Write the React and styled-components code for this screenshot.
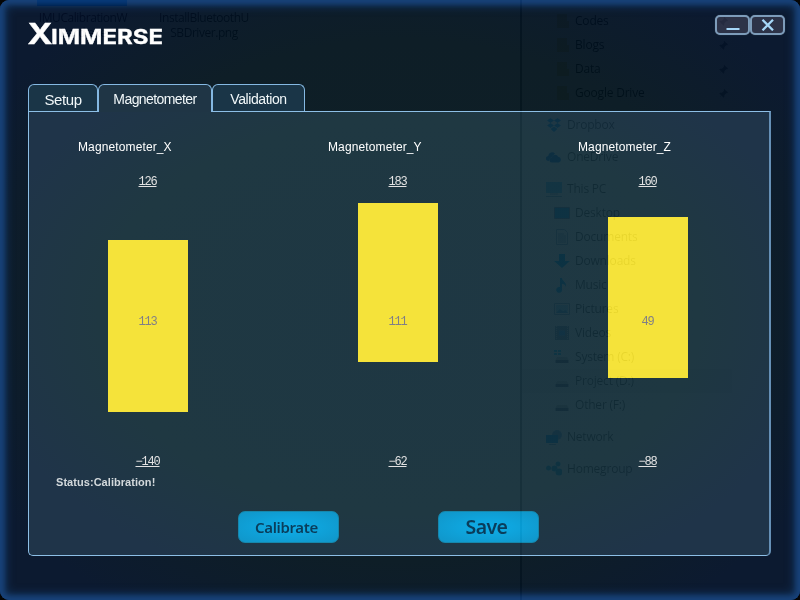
import React from "react";
import styled, { createGlobalStyle } from "styled-components";

const Global = createGlobalStyle`
  * { box-sizing: border-box; }
  body { margin: 0; background: #050505; overflow: hidden; }
`;

const Window = styled.main`
  position: relative;
  width: 800px;
  height: 600px;
  padding: 15px 15px 0 28px;
  overflow: hidden;
  border-radius: 9px;
  font-family: "Liberation Sans", Arial, sans-serif;
  background: radial-gradient(ellipse 60% 62% at 50% 50%, #0f2025 0%, #0e1e27 70%, #0c1a30 100%);
  box-shadow: inset 0 0 5px 4px #184279, inset 0 0 10px 6px #123560;
`;

const Header = styled.header`
  display: flex;
  justify-content: space-between;
  align-items: flex-start;
  height: 69px;
`;

const Logo = styled.svg`
  margin-top: 6px;
  fill: #fff;
  stroke: #fff;
  font-family: "Inter", "DejaVu Sans", sans-serif;
  font-weight: 700;
`;

const WindowButtons = styled.div`
  display: flex;
`;

const WindowButton = styled.button`
  display: grid;
  place-items: center;
  width: 35px;
  height: 20px;
  padding: 0;
  border: 2px solid #7d9cba;
  border-radius: 5px;
  background: #2d3348;
  box-shadow: 0 0 1px #566579;
`;

const Tabs = styled.nav`
  display: flex;
  height: 27px;
`;

const Tab = styled.button`
  width: ${(p) => p.$width}px;
  height: ${(p) => (p.$active ? 28 : 27)}px;
  padding: ${(p) => (p.$active ? "1px 0 0" : "2px 0 0")};
  border: 1px solid #85b9e3;
  border-bottom: 0;
  border-radius: 6px 6px 0 0;
  background: ${(p) => (p.$active ? "#1f3545" : "#1a3547")};
  color: #f2f8fa;
  font: ${(p) => p.$size}px "Liberation Sans", Arial, sans-serif;
  letter-spacing: ${(p) => p.$spacing || 0}px;
  white-space: nowrap;
  z-index: 1;
`;

const Panel = styled.section`
  display: flex;
  flex-direction: column;
  width: 743px;
  height: 445px;
  border: 1px solid #8dbfe6;
  border-right: 2px solid #6690b6;
  border-radius: 0 0 5px 5px;
  background: radial-gradient(ellipse 58% 64% at 50% 46%, #1e3743 0%, #1f3842 70%, #1f3449 100%);
`;

const Meters = styled.div`
  display: grid;
  grid-template-columns: repeat(3, 250px);
  padding: 27px 0 0 49px;
  height: 360px;
`;

const Meter = styled.div`
  display: flex;
  flex-direction: column;
  width: 140px;
`;

const MeterTitle = styled.div`
  height: 16px;
  margin-bottom: 19px;
  color: #fff;
  font-size: 12px;
  line-height: 16px;
  letter-spacing: 0.12px;
  white-space: nowrap;
`;

const Value = styled.div`
  height: 14px;
  padding-right: 1px;
  color: ${(p) => (p.$inside ? "#807f86" : "#e2e2e2")};
  font: 12px/16px "Liberation Mono", monospace;
  letter-spacing: -1.2px;
  text-align: center;
  text-decoration: ${(p) => (p.$inside ? "none" : "underline")};
  text-decoration-thickness: 1px;
  text-underline-offset: 1px;
`;

const Track = styled.div`
  display: grid;
  width: 80px;
  height: 266px;
  margin-left: 30px;
`;

const Bar = styled.div`
  grid-area: 1 / 1;
  height: ${(p) => p.$height}px;
  margin-top: ${(p) => p.$top}px;
  background: #f5e33a;
`;

const Current = styled.div`
  grid-area: 1 / 1;
  align-self: center;
  z-index: 1;
`;

const Status = styled.div`
  height: 16px;
  margin: 2px 0 0 27px;
  color: #d3d9dc;
  font-size: 11px;
  font-weight: 700;
  line-height: 16px;
  letter-spacing: 0.05px;
`;

const Actions = styled.div`
  display: flex;
  gap: 99px;
  padding: 21px 0 0 209px;
`;

const Action = styled.button`
  width: 101px;
  height: 32px;
  padding: 0 4px 0 0;
  border: 1px solid #1687ac;
  border-radius: 7px;
  background: radial-gradient(ellipse at center, #0eade9 0%, #0fa4dc 40%, #1095c8 100%);
  color: #0a3d5b;
  font: 600 ${(p) => p.$size}px/28px "Noto Sans", sans-serif;
  letter-spacing: ${(p) => p.$spacing}px;
`;

/* The desktop seen through the translucent window: every colour is subtracted. */
const Backdrop = styled.aside`
  position: absolute;
  inset: 0;
  z-index: 2;
  pointer-events: none;
  mix-blend-mode: difference;
  color: #0e0e0e;
  font: 12px/16px "Open Sans", "Noto Sans", sans-serif;
  letter-spacing: -0.2px;
`;

const Files = styled.div`
  position: absolute;
  left: -37px;
  top: 10px;
  display: flex;
  text-align: center;
  line-height: 15px;
  letter-spacing: -0.45px;
`;

const FileName = styled.div`
  width: ${(p) => p.$width}px;
`;

const Thumbnail = styled.div`
  position: absolute;
  left: 37px;
  top: 0;
  width: 90px;
  height: 6px;
  background: #100800;
`;

const Explorer = styled.div`
  position: absolute;
  left: 520px;
  top: 0;
  bottom: 0;
  width: 280px;
  padding-top: 9px;
  border-left: 2px solid #080808;
`;

const Item = styled.div`
  display: flex;
  align-items: center;
  gap: 5px;
  width: 210px;
  height: 24px;
  margin-top: ${(p) => (p.$gap ? 8 : 0)}px;
  padding-left: ${(p) => (p.$nested ? 32 : 24)}px;
  padding-right: 3px;
  background: ${(p) => (p.$selected ? "#010101" : "transparent")};
`;

const ItemName = styled.span`
  flex: 1;
`;

const ItemIcon = styled.svg`
  flex: none;
  width: 16px;
  height: 16px;
`;

const Pin = () => (
  <svg width="11" height="11" viewBox="0 0 12 12" fill="#080808">
    <path d="M7 1l4 4-1 1-1-.3L7 8l-.2 2L6 10.600 3.800 8.200 1 11l2.400-3.200L1.200 6l1-.8 2 .1L6.500 3 6 2z" />
  </svg>
);

const drive = (
  <g>
    <path d="M3 8h10l1.500 3h-13z" fill="#040404" />
    <rect x="1.500" y="11" width="13" height="3" fill="#0b0b09" />
  </g>
);

const icons = {
  folder: <path d="M3 1h10v7h2v7H3z" fill="#010206" />,
  dropbox: <path d="M4.500 1L8 3.500 4.500 6 1 3.500zM11.500 1L15 3.500 11.500 6 8 3.500zM4.500 6L8 8.500 4.500 11 1 8.500zM11.500 6L15 8.500 11.500 11 8 8.500zM4.500 12L8 9.500l3.500 2.500L8 15z" fill="#120700" />,
  cloud: (
    <g>
      <path d="M2.500 12a2.500 2.500 0 01-.3-5A4 4 0 019 4.500" fill="#120a02" />
      <path d="M6 13.500a2.500 2.500 0 01-.3-5 3.500 3.500 0 016.600-.8 3 3 0 01.7 5.800z" fill="#120a02" />
    </g>
  ),
  pc: (
    <g>
      <rect x="0" y="1" width="16" height="11" fill="#0c0400" />
      <path d="M4 13h8M0 15.500h16" stroke="#090604" />
    </g>
  ),
  desktop: <path d="M.5 2.500h15v11H.5z" fill="#110600" stroke="#0a0805" />,
  doc: <path d="M2.500 .5h8l3 3v12h-11zM4 5h6M4 7h8M4 9h8M4 11h8M4 13h8" fill="none" stroke="#080604" />,
  down: <path d="M5 1h6v7h5l-8 7-8-7h5z" fill="#130600" />,
  music: <path d="M6 1h2c0 3 5 4 4 9-1-3-3-3-4-3v5a3 3 0 11-2-2z" fill="#120600" />,
  picture: (
    <g>
      <path d="M.5 2.500h15v11H.5z" fill="none" stroke="#080604" />
      <path d="M2 4h12v8H2z" fill="#060200" />
      <path d="M2 12l4-4 3 2 3-1 2 3z" fill="#0c0602" />
    </g>
  ),
  video: (
    <g>
      <rect x="1" y="1" width="14" height="14" fill="#090705" />
      <path d="M2.500 1v14M13.500 1v14" stroke="#020202" strokeDasharray="1 1" />
      <path d="M5 8h6" stroke="#0d0600" strokeWidth="5" />
    </g>
  ),
  system: (
    <g>
      <path d="M0 1h3v2H0zM4 1h3v2H4zM0 4h3v2H0zM4 4h3v2H4z" fill="#100400" />
      {drive}
    </g>
  ),
  drive,
  network: (
    <g>
      <circle cx="11" cy="6" r="5" fill="#0a0602" />
      <path d="M0 6h12v8H0z" fill="#120700" />
      <path d="M3 15.500h7" stroke="#090604" />
    </g>
  ),
  group: (
    <g fill="#100602">
      <circle cx="2.500" cy="7" r="2.500" />
      <circle cx="12" cy="3" r="2.500" />
      <circle cx="8.500" cy="7.500" r="3" />
      <circle cx="13" cy="11" r="3.500" />
    </g>
  ),
};

const items = [
  { name: "Codes", icon: "folder", nested: true, pin: true },
  { name: "Blogs", icon: "folder", nested: true, pin: true },
  { name: "Data", icon: "folder", nested: true, pin: true },
  { name: "Google Drive", icon: "folder", nested: true, pin: true },
  { name: "Dropbox", icon: "dropbox", gap: true },
  { name: "OneDrive", icon: "cloud", gap: true },
  { name: "This PC", icon: "pc", gap: true },
  { name: "Desktop", icon: "desktop", nested: true },
  { name: "Documents", icon: "doc", nested: true },
  { name: "Downloads", icon: "down", nested: true },
  { name: "Music", icon: "music", nested: true },
  { name: "Pictures", icon: "picture", nested: true },
  { name: "Videos", icon: "video", nested: true },
  { name: "System (C:)", icon: "system", nested: true },
  { name: "Project (D:)", icon: "drive", nested: true, selected: true },
  { name: "Other (F:)", icon: "drive", nested: true },
  { name: "Network", icon: "network", gap: true },
  { name: "Homegroup", icon: "group", gap: true },
];

const meters = [
  { axis: "X", max: "126", min: "−140", value: "113", top: 52, height: 172 },
  { axis: "Y", max: "183", min: "−62", value: "111", top: 15, height: 159 },
  { axis: "Z", max: "160", min: "−88", value: "49", top: 29, height: 161 },
];

export default function App() {
  return (
    <Window>
      <Global />
      <Header>
        <Logo width="136" height="26" viewBox="0 0 136 26">
          <text x="-0.500" y="22.800" fontSize="28.500" textLength="25" lengthAdjust="spacingAndGlyphs" strokeWidth="0.4">X</text>
          <text x="23" y="22.500" fontSize="20" textLength="112" lengthAdjust="spacingAndGlyphs" strokeWidth="0.3">IMMERSE</text>
        </Logo>
        <WindowButtons>
          <WindowButton aria-label="Minimize">
            <svg width="14" height="12" viewBox="0 0 14 12"><path d="M0.500 10h13" stroke="#a5d6f7" strokeWidth="2" /></svg>
          </WindowButton>
          <WindowButton aria-label="Close">
            <svg width="14" height="12" viewBox="0 0 14 12"><path d="M1.500 .8l10.500 10.500M12 .8L1.500 11.300" stroke="#a5d6f7" strokeWidth="2.300" /></svg>
          </WindowButton>
        </WindowButtons>
      </Header>
      <Tabs>
        <Tab $width={70} $size={15} $spacing={-0.4}>Setup</Tab>
        <Tab $width={114} $size={14} $spacing={-0.58} $active>Magnetometer</Tab>
        <Tab $width={93} $size={14} $spacing={-0.42}>Validation</Tab>
      </Tabs>
      <Panel>
        <Meters>
          {meters.map((m) => (
            <Meter key={m.axis}>
              <MeterTitle>Magnetometer_{m.axis}</MeterTitle>
              <Value>{m.max}</Value>
              <Track>
                <Bar $top={m.top} $height={m.height} />
                <Current><Value $inside>{m.value}</Value></Current>
              </Track>
              <Value>{m.min}</Value>
            </Meter>
          ))}
        </Meters>
        <Status>Status:Calibration!</Status>
        <Actions>
          <Action $size={15} $spacing={-0.35}>Calibrate</Action>
          <Action $size={19.5} $spacing={-0.6}>Save</Action>
        </Actions>
      </Panel>
      <Backdrop aria-hidden="true">
        <Thumbnail />
        <Files>
          <FileName $width={50}>W</FileName>
          <FileName $width={140}>IMUCalibrationW<br />izard.exe</FileName>
          <FileName $width={102}>InstallBluetoothU<br />SBDriver.png</FileName>
        </Files>
        <Explorer>
          {items.map((it) => (
            <Item key={it.name} $nested={it.nested} $gap={it.gap} $selected={it.selected}>
              <ItemIcon viewBox="0 0 16 16">{icons[it.icon]}</ItemIcon>
              <ItemName>{it.name}</ItemName>
              {it.pin && <Pin />}
            </Item>
          ))}
        </Explorer>
      </Backdrop>
    </Window>
  );
}
